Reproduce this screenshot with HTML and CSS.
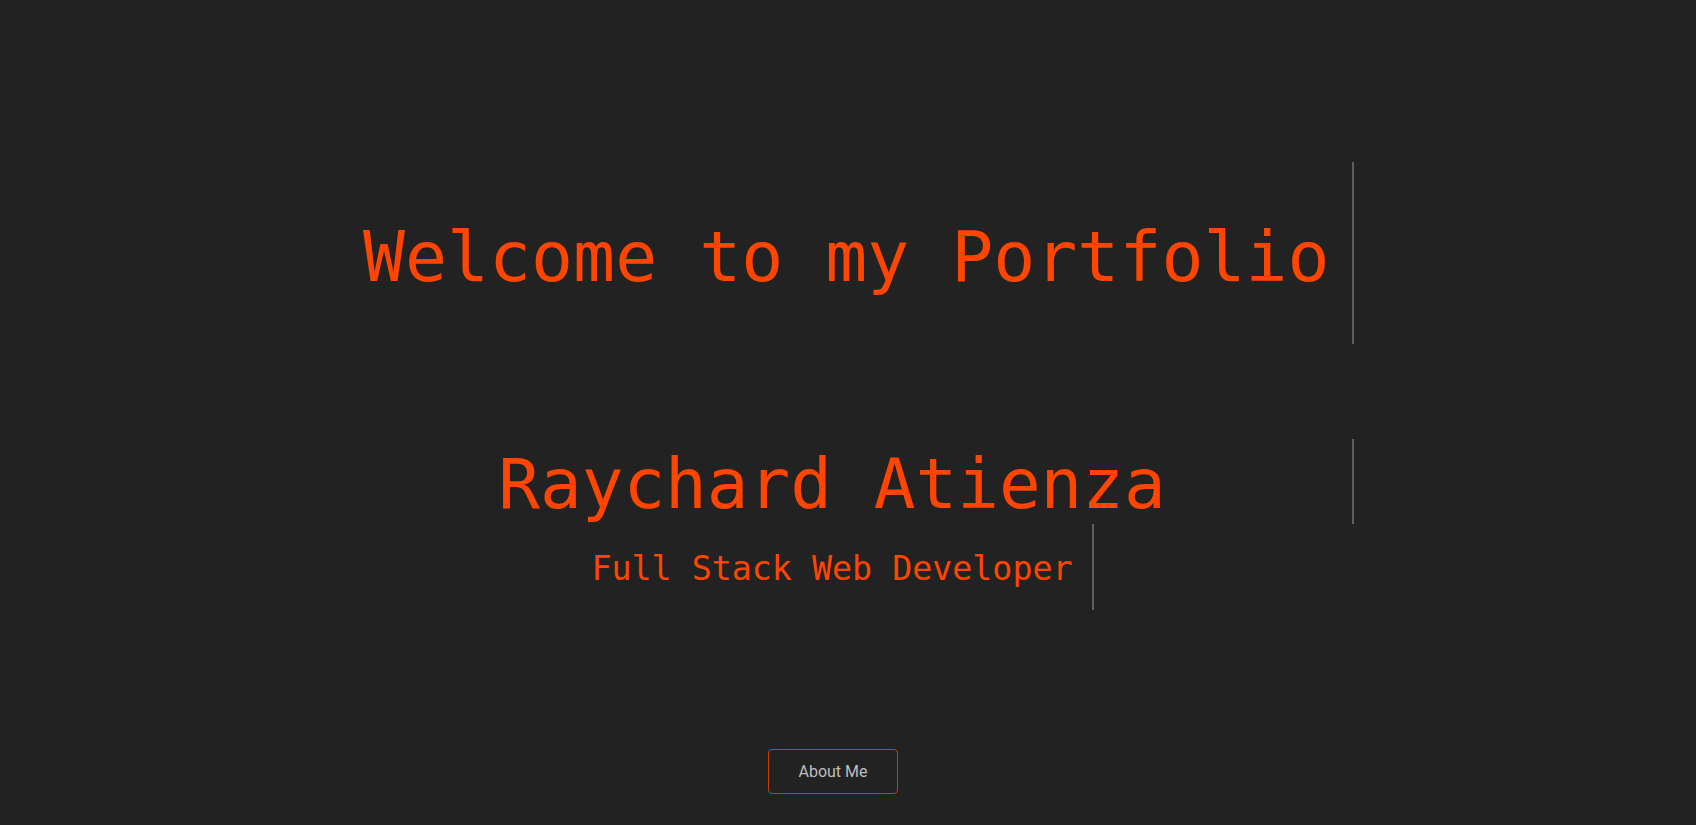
FILE: index.html
```html
<!DOCTYPE html>
<html lang="en">
<head>
<meta charset="UTF-8">
<title>Portfolio</title>
<link rel="stylesheet" href="styles.css">
</head>
<body>
<main class="page">
  <section class="hero">
    <h1 class="welcome">Welcome to my Portfolio</h1>
    <h2 class="name">Raychard Atienza</h2>
    <p class="role">Full Stack Web Developer</p>
    <a class="btn" href="#about">About Me</a>
  </section>
</main>
</body>
</html>
```
FILE: styles.css
```css
html, body {
  margin: 0;
  padding: 0;
  background: #222222;
  height: 100%;
}

.page {
  box-sizing: border-box;
  min-height: 100vh;
  padding: 162px 30px 0 0;
  display: flex;
  flex-direction: column;
  align-items: center;
}

.hero {
  display: flex;
  flex-direction: column;
  align-items: center;
  font-family: "DejaVu Sans Mono", monospace;
  color: #ff4500;
}

.welcome {
  box-sizing: border-box;
  width: 1042px;
  margin: 0;
  padding: 54px 0 46px 51px;
  font-size: 69.8px;
  font-weight: normal;
  line-height: 82px;
  white-space: nowrap;
  text-align: left;
  border-right: 2px solid #5e5e5e;
}

.name {
  box-sizing: border-box;
  width: 1042px;
  margin: 95px 0 0 0;
  padding: 6px 0 0 0;
  font-size: 69.3px;
  font-weight: normal;
  line-height: 79px;
  white-space: nowrap;
  text-align: center;
  border-right: 2px solid #5e5e5e;
}

.role {
  margin: 0;
  padding: 4px 19px 0 19px;
  font-size: 33.3px;
  line-height: 82px;
  white-space: nowrap;
  border-right: 2px solid #5e5e5e;
}

.btn {
  box-sizing: border-box;
  margin-top: 139px;
  width: 130px;
  height: 45px;
  display: flex;
  align-items: center;
  justify-content: center;
  border: 1px solid #c93c06;
  border-radius: 4px;
  font-family: Roboto, "Liberation Sans", sans-serif;
  font-size: 16px;
  color: #bdbdbd;
  text-decoration: none;
}
```
